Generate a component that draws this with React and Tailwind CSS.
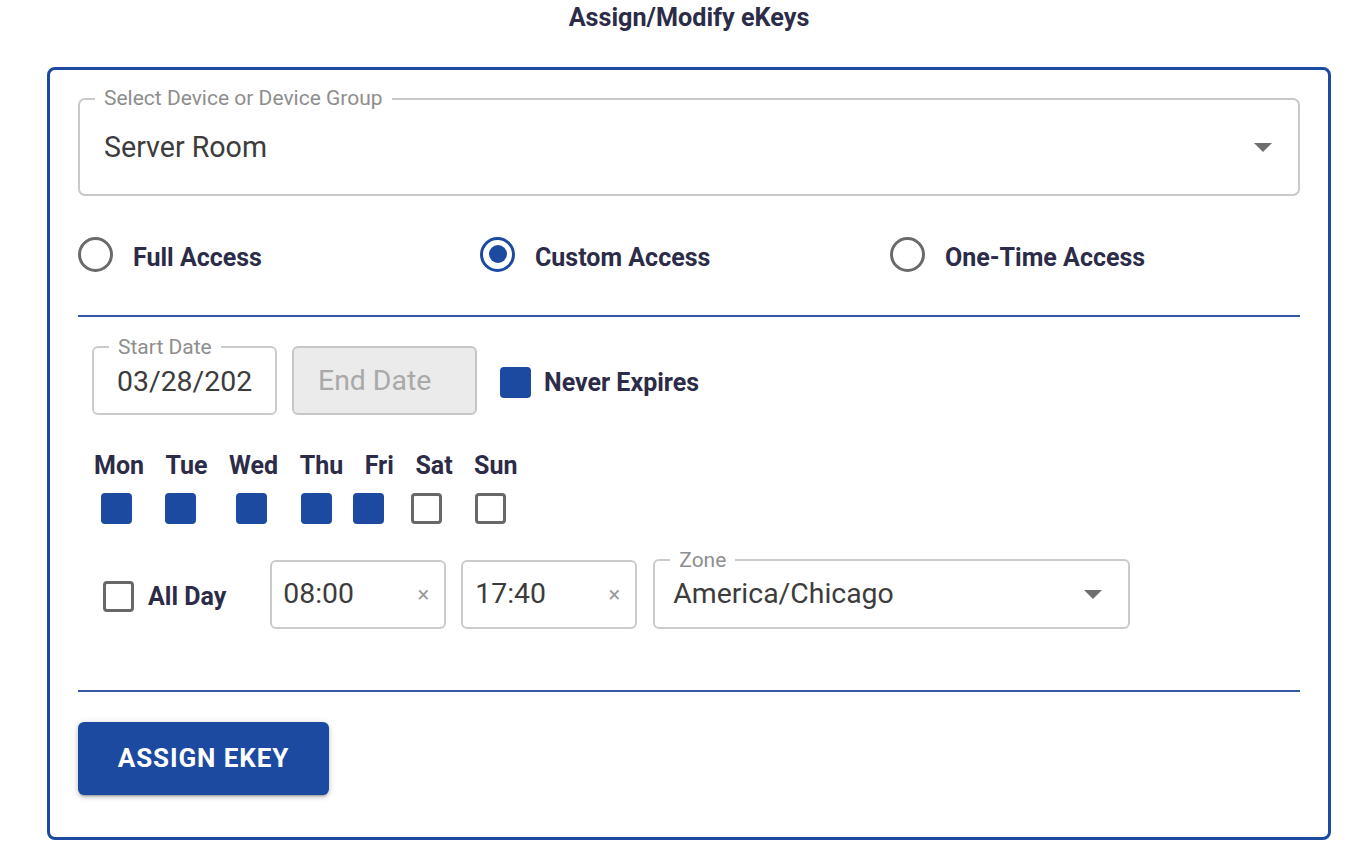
import React from "react";

function Check({ checked, className = "" }) {
  return checked ? (
    <div className={`w-[31px] h-[31px] rounded-[4px] bg-[#1d4aa1] shrink-0 ${className}`} />
  ) : (
    <div className={`w-[31px] h-[31px] rounded-[4px] border-[3px] border-[#686868] bg-white shrink-0 ${className}`} />
  );
}

function Radio({ checked }) {
  return checked ? (
    <div className="w-[35px] h-[35px] rounded-full border-[3px] border-[#1d4aa1] flex items-center justify-center shrink-0">
      <div className="w-[18px] h-[18px] rounded-full bg-[#1d4aa1]" />
    </div>
  ) : (
    <div className="w-[35px] h-[35px] rounded-full border-[3px] border-[#6b6b6b] shrink-0" />
  );
}

function Caret({ className = "" }) {
  return (
    <svg width="18" height="9" viewBox="0 0 18 9" className={className}>
      <path d="M0 0 L18 0 L9 9 Z" fill="#6f6f6f" />
    </svg>
  );
}

export default function App() {
  const days = [
    { d: "Mon", c: true, ml: "ml-[9px]" },
    { d: "Tue", c: true, ml: "ml-[33px]" },
    { d: "Wed", c: true, ml: "ml-[40px]" },
    { d: "Thu", c: true, ml: "ml-[34px]" },
    { d: "Fri", c: true, ml: "ml-[21px]" },
    { d: "Sat", c: false, ml: "ml-[27px]" },
    { d: "Sun", c: false, ml: "ml-[33px]" },
  ];
  return (
    <div className="w-[1366px] min-h-[854px] bg-white font-['Roboto',sans-serif] text-[#2c2c48]">
      <div className="h-[36px] flex items-center justify-center ml-[12px] text-[25.2px] font-bold leading-[36px]">
        Assign/Modify eKeys
      </div>
      <div className="ml-[47px] mt-[31px] w-[1284px] border-[3px] border-[#1d4aa1] rounded-[8px] px-[28px] pt-[28px] pb-[42px] flex flex-col">
        {/* Select */}
        <div className="relative h-[98px] border-2 border-[#c9c9c9] rounded-[7px] flex items-center justify-between pl-[24px] pr-[26px]">
          <span className="absolute left-[15px] top-[-15px] bg-white px-[9px] text-[21px] leading-[26px] text-[#8e8e8e]">
            Select Device or Device Group
          </span>
          <span className="text-[28.6px] text-[#3c3c3c]">Server Room</span>
          <Caret />
        </div>

        {/* Radios */}
        <div className="flex items-center h-[50px] mt-[33px] text-[25px] font-bold">
          <div className="w-[402px] flex items-center">
            <Radio checked={false} />
            <span className="ml-[20px] mt-[8px]">Full Access</span>
          </div>
          <div className="w-[410px] flex items-center">
            <Radio checked={true} />
            <span className="ml-[20px] mt-[8px]">Custom Access</span>
          </div>
          <div className="flex items-center">
            <Radio checked={false} />
            <span className="ml-[20px] mt-[8px]">One-Time Access</span>
          </div>
        </div>

        <div className="h-[2px] bg-[#3558a6] mt-[36px]" />

        {/* Dates */}
        <div className="pl-[14px] mt-[29px] flex items-center">
          <div className="relative w-[185px] h-[69px] border-2 border-[#cbcbcb] rounded-[6px] flex items-center pl-[23px] pt-[3px]">
            <span className="absolute left-[15px] top-[-14px] bg-white px-[9px] text-[21px] leading-[26px] text-[#8e8e8e]">
              Start Date
            </span>
            <span className="block w-[135px] overflow-hidden whitespace-nowrap text-[28.4px] text-[#3c3c3c]">03/28/2024</span>
          </div>
          <div className="ml-[15px] w-[185px] h-[69px] border-2 border-[#c6c6c6] rounded-[6px] bg-[#ebebeb] flex items-center pl-[24px] pt-[2px]">
            <span className="text-[28.4px] text-[#a9a9a9]">End Date</span>
          </div>
          <Check checked className="ml-[23px] mt-[4px]" />
          <span className="ml-[13px] mt-[4px] text-[25px] font-bold">Never Expires</span>
        </div>

        {/* Days */}
        <div className="mt-[36px] flex gap-[21.5px] text-[25px] font-bold leading-[30px] pl-[16px]">
          {days.map((x) => (
            <span key={x.d}>{x.d}</span>
          ))}
        </div>
        <div className="pl-[14px] mt-[12px] flex">
          {days.map((x) => (
            <Check key={x.d} checked={x.c} className={x.ml} />
          ))}
        </div>

        {/* Time row */}
        <div className="mt-[35px] flex items-center">
          <Check checked={false} className="ml-[25px] mt-[4px]" />
          <span className="ml-[14px] mt-[5px] text-[25px] font-bold">All Day</span>
          <div className="ml-[44px] w-[176px] h-[69px] border-2 border-[#cbcbcb] rounded-[6px] flex items-center justify-between pl-[11px] pr-[15px]">
            <span className="text-[28.4px] text-[#3c3c3c]">08:00</span>
            <span className="text-[22px] text-[#9a9a9a]">×</span>
          </div>
          <div className="ml-[15px] w-[176px] h-[69px] border-2 border-[#cbcbcb] rounded-[6px] flex items-center justify-between pl-[12px] pr-[15px]">
            <span className="text-[28.4px] text-[#3c3c3c]">17:40</span>
            <span className="text-[22px] text-[#9a9a9a]">×</span>
          </div>
          <div className="relative ml-[16px] w-[477px] h-[70px] border-2 border-[#cbcbcb] rounded-[6px] flex items-center justify-between pl-[18px] pr-[26px]">
            <span className="absolute left-[15px] top-[-14px] bg-white px-[9px] text-[21px] leading-[26px] text-[#8e8e8e]">
              Zone
            </span>
            <span className="text-[28.4px] text-[#3c3c3c]">America/Chicago</span>
            <Caret />
          </div>
        </div>

        <div className="h-[2px] bg-[#3558a6] mt-[61px]" />

        <div className="mt-[30px]">
          <button className="w-[251px] h-[73px] rounded-[6px] bg-[#1d4aa1] text-white text-[26px] font-bold tracking-[0.9px] shadow-[0_3px_2px_-2px_rgba(0,0,0,0.25),0_2px_4px_0_rgba(0,0,0,0.16),0_1px_8px_0_rgba(0,0,0,0.12)]">
            ASSIGN EKEY
          </button>
        </div>
      </div>
    </div>
  );
}
